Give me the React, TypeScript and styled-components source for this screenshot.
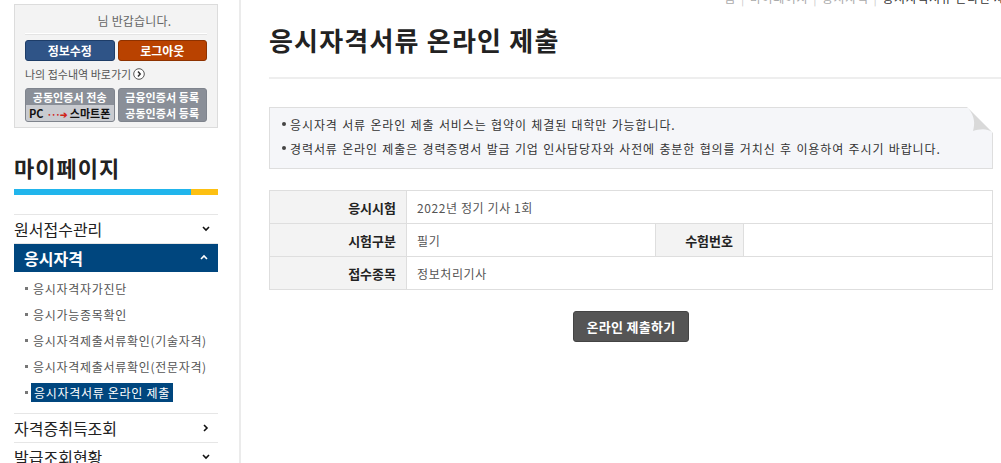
import { ReactElement } from 'react'
import styled, { createGlobalStyle } from 'styled-components'

const GlobalStyle = createGlobalStyle`
  html, body {
    margin: 0;
    padding: 0;
    background: #fff;
    overflow: hidden;
  }
  body {
    font-family: "Noto Sans CJK KR", "Noto Sans", sans-serif;
    color: #333;
  }
  * { box-sizing: border-box; }
`

const Page = styled.div`
  display: flex;
  width: 1001px;
  height: 463px;
  overflow: hidden;
`

/* ---------- sidebar ---------- */

const Sidebar = styled.aside`
  width: 241px;
  flex: none;
  padding: 4px 21px 0 14px;
  border-right: 2px solid #ebebeb;
`

const LoginBox = styled.div`
  height: 124px;
  border: 1px solid #dcdcdc;
  background: #f3f3f3;
  padding: 8px 10px 0;
`

const Greeting = styled.p`
  margin: 0;
  height: 21px;
  line-height: 16px;
  font-size: 12px;
  color: #666;
  text-align: center;
  letter-spacing: 0.2px;
  border-bottom: 1px solid #fff;
  box-shadow: 0 1px 0 #e4e4e4;
`

const NameSlot = styled.span`
  display: inline-block;
  width: 34px;
`

const ButtonRow = styled.div`
  display: flex;
  gap: 3px;
  margin-top: 6px;
`

const LoginBtn = styled.button<{ $tone: 'blue' | 'orange' }>`
  flex: 1;
  height: 21px;
  border-radius: 3px;
  border: 1px solid ${p => (p.$tone === 'blue' ? '#1e3d68' : '#8e3200')};
  background: ${p => (p.$tone === 'blue' ? '#2f5487' : '#b94200')};
  color: #fff;
  font-family: inherit;
  font-size: 12px;
  font-weight: 700;
  line-height: 18px;
  padding: 0;
`

const ShortcutLink = styled.div`
  display: flex;
  align-items: center;
  gap: 2px;
  margin-top: 5px;
  font-size: 11px;
  color: #555;
  height: 16px;
`

const CertRow = styled.div`
  display: flex;
  gap: 3px;
  margin-top: 6px;
`

const CertBtn = styled.div`
  flex: 1;
  height: 34px;
  border-radius: 3px;
  background: #8a8f98;
  border: 1px solid #7f848d;
  overflow: hidden;
  display: flex;
  flex-direction: column;
  color: #fff;
  font-size: 11px;
  font-weight: 700;
  text-align: center;
`

const CertLine = styled.div<{ $light?: boolean }>`
  flex: 1;
  line-height: 16px;
  background: ${p => (p.$light ? '#c9cbd0' : 'transparent')};
  color: ${p => (p.$light ? '#111' : '#fff')};
  letter-spacing: 0.1px;
`

const Arrow = styled.span`
  color: #d0241b;
  font-weight: 700;
  font-size: 9px;
  letter-spacing: -1px;
  margin: 0 3px;
`

const SideTitle = styled.h2`
  margin: 24px 0 0;
  height: 30px;
  line-height: 30px;
  font-size: 22px;
  font-weight: 700;
  color: #222;
  letter-spacing: 1px;
`

const ColorBar = styled.div`
  margin-top: 7px;
  height: 6px;
  background: linear-gradient(to right, #21b5ec 0, #21b5ec 86.8%, #fdc012 86.8%, #fdc012 100%);
`

const Menu = styled.ul`
  list-style: none;
  margin: 19px 0 0;
  padding: 0;
`

const MenuItem = styled.li`
  border-top: 1px solid #e6e6e6;
`

const MenuHead = styled.div<{ $active?: boolean }>`
  display: flex;
  align-items: center;
  justify-content: space-between;
  height: 28px;
  padding: ${p => (p.$active ? '0 10px 0 10px' : '0 8px 0 0')};
  background: ${p => (p.$active ? '#00467e' : 'transparent')};
  color: ${p => (p.$active ? '#fff' : '#222')};
  font-size: 16px;
  font-weight: ${p => (p.$active ? 700 : 400)};
`

const SubList = styled.ul`
  list-style: none;
  margin: 0;
  padding: 3px 0 8px 11px;
`

const SubItem = styled.li<{ $active?: boolean }>`
  display: flex;
  align-items: center;
  height: 26px;
  font-size: 12px;
  color: #555;

  &::before {
    content: '';
    width: 3px;
    height: 3px;
    background: #777;
    margin-right: ${p => (p.$active ? '3px' : '5px')};
    flex: none;
  }

  span {
    display: inline-block;
    height: 19px;
    line-height: 19px;
    letter-spacing: 0.7px;
    padding: 0 ${p => (p.$active ? '3px' : '0')};
    background: ${p => (p.$active ? '#00467e' : 'transparent')};
    color: ${p => (p.$active ? '#fff' : '#555')};
  }
`

/* ---------- main ---------- */

const Main = styled.main`
  flex: 1;
  min-width: 0;
  padding: 0 8px 0 28px;
`

const Breadcrumb = styled.div`
  margin: -9px -24px 0 0;
  height: 14px;
  line-height: 14px;
  font-size: 12px;
  letter-spacing: 0.6px;
  color: #aaa;
  text-align: right;
  white-space: nowrap;

  b {
    font-weight: 400;
    color: #333;
  }
  i {
    font-style: normal;
    color: #ccc;
    margin: 0 5px;
  }
`

const PageTitle = styled.h1`
  margin: 17px 0 0;
  height: 36px;
  line-height: 36px;
  font-size: 26px;
  font-weight: 700;
  color: #222;
  letter-spacing: 1.2px;
`

const TitleRule = styled.hr`
  margin: 19px -8px 0 0;
  border: none;
  border-top: 2px solid #eee;
`

const Notice = styled.div`
  position: relative;
  margin-top: 28px;
  height: 62px;
  border: 1px solid #dedede;
  background: #f5f6f9;
  padding: 4px 0 0 12px;
`

const NoticeItem = styled.p`
  display: flex;
  align-items: center;
  margin: 0;
  height: 24px;
  font-size: 12px;
  letter-spacing: 0.9px;
  word-spacing: 0.8px;
  color: #333;

  &::before {
    content: '';
    width: 4px;
    height: 4px;
    border-radius: 50%;
    background: #444;
    margin-right: 4px;
  }
`

const Fold = styled.svg`
  position: absolute;
  top: -1px;
  right: -1px;
`

const InfoTable = styled.table`
  margin-top: 21px;
  width: 100%;
  border-collapse: collapse;
  table-layout: fixed;
  border: 1px solid #dedede;
  font-size: 12px;

  th, td {
    height: 33px;
    border: 1px solid #dedede;
    padding: 0 10px;
  }
  th {
    background: #f3f3f3;
    text-align: right;
    font-weight: 700;
    color: #222;
    font-size: 13px;
  }
  td {
    color: #555;
    letter-spacing: 0.6px;
  }
`

const Actions = styled.div`
  display: flex;
  justify-content: center;
  margin-top: 21px;
`

const SubmitBtn = styled.button`
  width: 116px;
  height: 31px;
  border: 1px solid #444;
  border-radius: 3px;
  background: #555;
  color: #fff;
  font-family: inherit;
  font-size: 13px;
  font-weight: 700;
  letter-spacing: 0.3px;
  padding: 0;
`

/* ---------- icons ---------- */

const Chevron = ({ dir, color }: { dir: 'down' | 'up' | 'right'; color: string }): ReactElement => {
  const pts = dir === 'down' ? '1,2 4,5 7,2' : dir === 'up' ? '1,5 4,2 7,5' : '2,1 5,4 2,7'
  return (
    <svg width="8" height="8" viewBox="0 0 8 8">
      <polyline points={pts} fill="none" stroke={color} strokeWidth="1.6" />
    </svg>
  )
}

const CircleArrow = (): ReactElement => (
  <svg width="12" height="12" viewBox="0 0 12 12">
    <circle cx="6" cy="6" r="5.3" fill="#fff" stroke="#555" strokeWidth="1" />
    <polyline points="5,3.5 7.2,6 5,8.5" fill="none" stroke="#333" strokeWidth="1.5" />
  </svg>
)

const subMenu = [
  '응시자격자가진단',
  '응시가능종목확인',
  '응시자격제출서류확인(기술자격)',
  '응시자격제출서류확인(전문자격)',
  '응시자격서류 온라인 제출',
]

export default function App(): ReactElement {
  return (
    <Page>
      <GlobalStyle />
      <Sidebar>
        <LoginBox>
          <Greeting>
            <NameSlot /> 님 반갑습니다.
          </Greeting>
          <ButtonRow>
            <LoginBtn $tone="blue">정보수정</LoginBtn>
            <LoginBtn $tone="orange">로그아웃</LoginBtn>
          </ButtonRow>
          <ShortcutLink>
            나의 접수내역 바로가기 <CircleArrow />
          </ShortcutLink>
          <CertRow>
            <CertBtn>
              <CertLine>공동인증서 전송</CertLine>
              <CertLine $light>
                PC<Arrow>···➔</Arrow>스마트폰
              </CertLine>
            </CertBtn>
            <CertBtn>
              <CertLine>금융인증서 등록</CertLine>
              <CertLine>공동인증서 등록</CertLine>
            </CertBtn>
          </CertRow>
        </LoginBox>

        <SideTitle>마이페이지</SideTitle>
        <ColorBar />

        <Menu>
          <MenuItem>
            <MenuHead>
              원서접수관리 <Chevron dir="down" color="#111" />
            </MenuHead>
          </MenuItem>
          <MenuItem>
            <MenuHead $active>
              응시자격 <Chevron dir="up" color="#fff" />
            </MenuHead>
            <SubList>
              {subMenu.map((s, i) => (
                <SubItem key={s} $active={i === subMenu.length - 1}>
                  <span>{s}</span>
                </SubItem>
              ))}
            </SubList>
          </MenuItem>
          <MenuItem>
            <MenuHead>
              자격증취득조회 <Chevron dir="right" color="#111" />
            </MenuHead>
          </MenuItem>
          <MenuItem>
            <MenuHead>
              발급조회현황 <Chevron dir="down" color="#111" />
            </MenuHead>
          </MenuItem>
        </Menu>
      </Sidebar>

      <Main>
        <Breadcrumb>
          홈<i>|</i>마이페이지<i>|</i>응시자격<i>|</i><b>응시자격서류 온라인 제출</b>
        </Breadcrumb>
        <PageTitle>응시자격서류 온라인 제출</PageTitle>
        <TitleRule />

        <Notice>
          <NoticeItem>응시자격 서류 온라인 제출 서비스는 협약이 체결된 대학만 가능합니다.</NoticeItem>
          <NoticeItem>
            경력서류 온라인 제출은 경력증명서 발급 기업 인사담당자와 사전에 충분한 협의를 거치신 후 이용하여 주시기 바랍니다.
          </NoticeItem>
          <Fold width="26" height="26" viewBox="0 0 26 26">
            <polygon points="0,0 26,0 26,26" fill="#fff" />
            <path d="M1,1 L25,25 C20,21 12,22 6,24 C8,17 8,9 1,1 Z" fill="#d9d9d9" />
          </Fold>
        </Notice>

        <InfoTable>
          <colgroup>
            <col style={{ width: 137 }} />
            <col style={{ width: 249 }} />
            <col style={{ width: 88 }} />
            <col />
          </colgroup>
          <tbody>
            <tr>
              <th>응시시험</th>
              <td colSpan={3}>2022년 정기 기사 1회</td>
            </tr>
            <tr>
              <th>시험구분</th>
              <td>필기</td>
              <th>수험번호</th>
              <td></td>
            </tr>
            <tr>
              <th>접수종목</th>
              <td colSpan={3}>정보처리기사</td>
            </tr>
          </tbody>
        </InfoTable>

        <Actions>
          <SubmitBtn>온라인 제출하기</SubmitBtn>
        </Actions>
      </Main>
    </Page>
  )
}
